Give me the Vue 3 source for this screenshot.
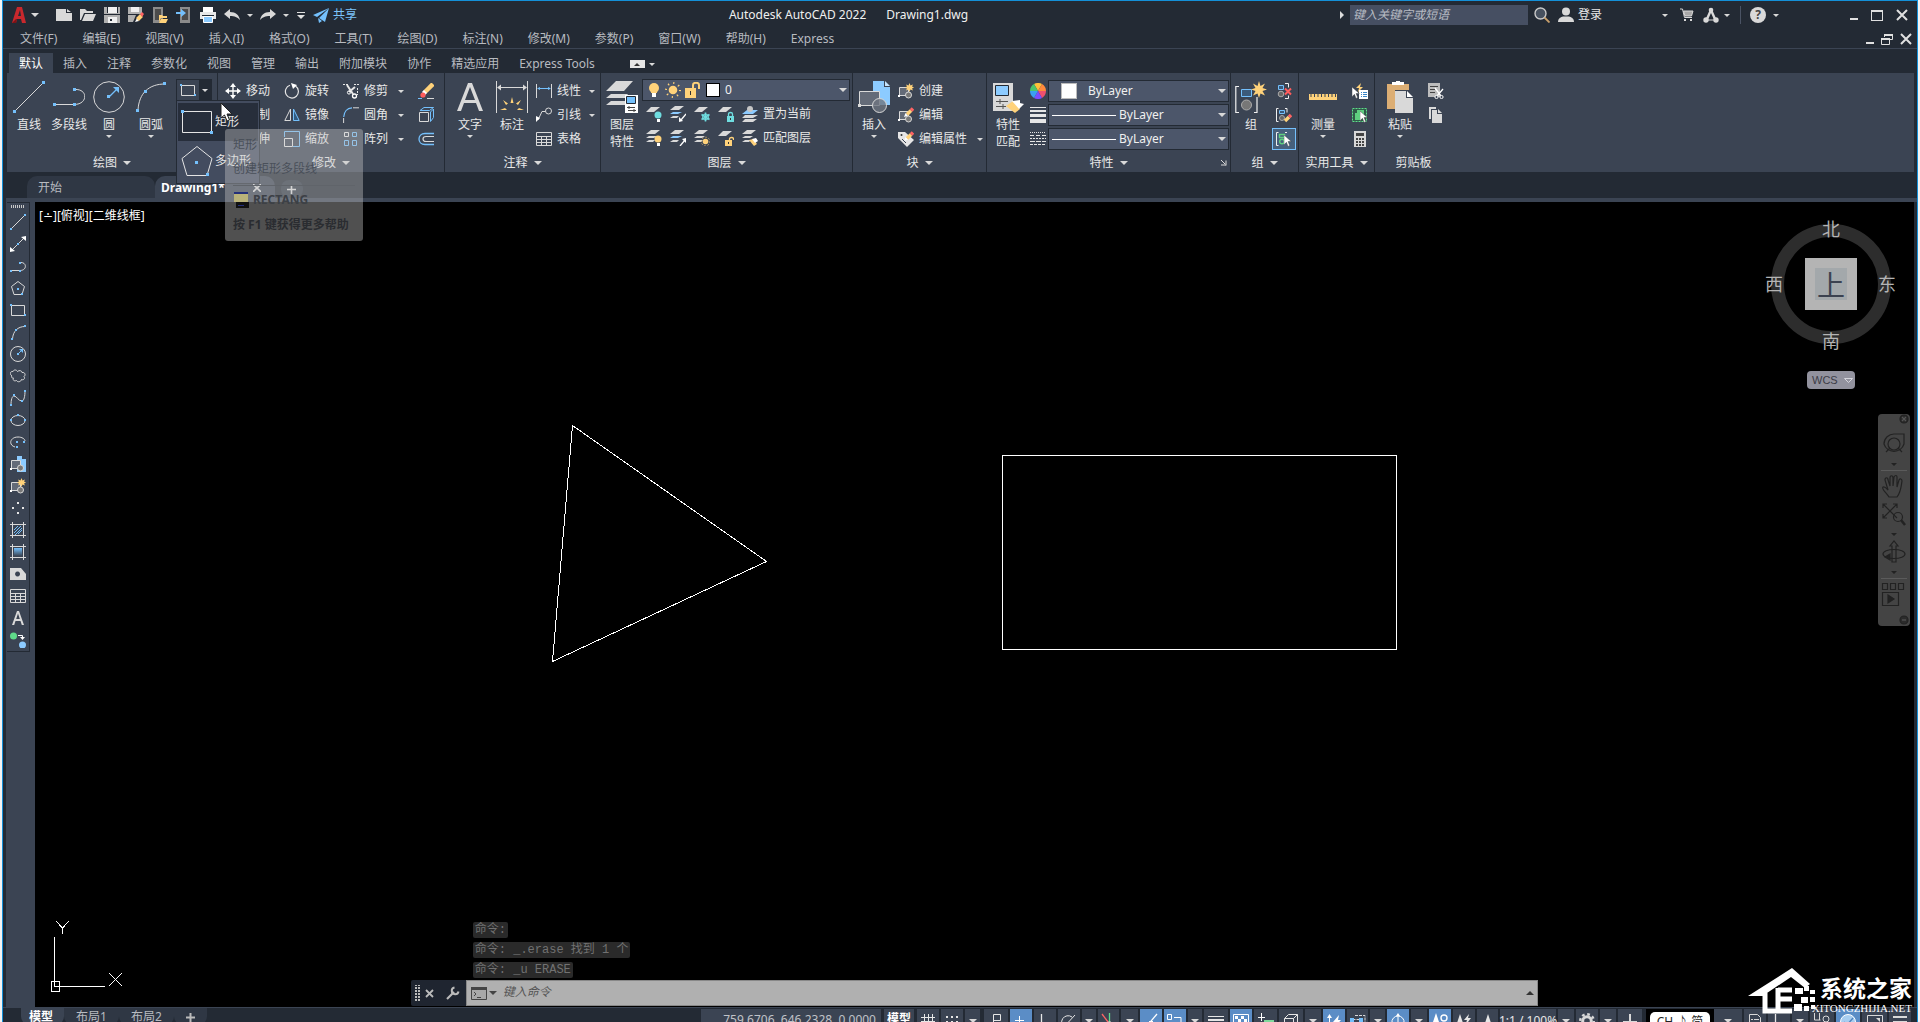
<script setup>
const quick = ['new', 'open', 'save', 'saveas', 'openmob', 'savemob', 'print']
const menus = ['文件(F)', '编辑(E)', '视图(V)', '插入(I)', '格式(O)', '工具(T)', '绘图(D)', '标注(N)', '修改(M)', '参数(P)', '窗口(W)', '帮助(H)', 'Express']
const tabs = ['默认', '插入', '注释', '参数化', '视图', '管理', '输出', '附加模块', '协作', '精选应用', 'Express Tools']
const draw = [
  { icon: 'line32', text: '直线' },
  { icon: 'pline32', text: '多段线' },
  { icon: 'circle32', text: '圆', more: true },
  { icon: 'arc32', text: '圆弧', more: true },
]
const modify = [
  [{ icon: 'move', text: '移动' }, { icon: 'copy', text: '复制' }, { icon: 'stretch', text: '拉伸' }],
  [{ icon: 'rotate', text: '旋转' }, { icon: 'mirror', text: '镜像' }, { icon: 'scale', text: '缩放' }],
  [{ icon: 'trim', text: '修剪', more: true }, { icon: 'fillet', text: '圆角', more: true }, { icon: 'array', text: '阵列', more: true }],
]
const modifyExtra = ['erase', 'explode', 'offset']
const annotate = [{ icon: 'linear', text: '线性', more: true }, { icon: 'leader', text: '引线', more: true }, { icon: 'table', text: '表格' }]
const layerRows = [
  { icons: ['lay-off', 'lay-iso', 'lay-freeze', 'lay-lock', 'lay-cur'], text: '置为当前' },
  { icons: ['lay-on', 'lay-uniso', 'lay-thaw', 'lay-unlock', 'lay-match'], text: '匹配图层' },
]
const block = [{ icon: 'bcreate', text: '创建' }, { icon: 'bedit', text: '编辑' }, { icon: 'battr', text: '编辑属性', more: true }]
const tools = ['line', 'xline', 'pline', 'polygon', 'rect', 'arc', 'circle', 'cloud', 'spline', 'ellipse', 'earc', 'insert', 'bcreate', 'points', 'hatch', 'gradient', 'region', 'table', 'text', 'addsel']
const status = [
  { icon: 'grid', w: 24 }, { icon: 'snap', w: 24 }, { more: true, w: 19, gap: true },
  { icon: 'infer', w: 26 }, { icon: 'dyn', w: 24, on: true }, { icon: 'ortho', w: 24 },
  { icon: 'polar', w: 24 }, { more: true, w: 16 }, { icon: 'iso', w: 23 }, { more: true, w: 19 },
  { icon: 'track', w: 24, on: true }, { icon: 'osnap', w: 24, on: true }, { more: true, w: 16 },
  { icon: 'lwt', w: 26 }, { icon: 'transp', w: 24, on: true }, { icon: 'cycle', w: 25 },
  { icon: 'cube', w: 26 }, { more: true, w: 18 }, { icon: 'ducs', w: 24, on: true },
  { icon: 'filter', w: 23 }, { more: true, w: 17 }, { icon: 'gizmo', w: 24, on: true }, { more: true, w: 18 },
  { icon: 'anno', w: 24, on: true }, { icon: 'annoauto', w: 24 }, { icon: 'annoscale', w: 23 },
  { text: '1:1 / 100%', w: 58 }, { more: true, w: 18 }, { icon: 'gear', w: 24 }, { more: true, w: 18 },
  { icon: 'plus', w: 28, gap: true },
]
const statusEnd = [
  { more: true, w: 30 }, { icon: 'props', w: 24 }, { icon: 'ortho', w: 24 }, { more: true, w: 18 },
  { icon: 'isolate', w: 26 }, { icon: 'hw', w: 26, on: true }, { icon: 'full', w: 27 }, { icon: 'bars', w: 24 },
]
const history = ['命令:', '命令: _.erase 找到 1 个', '命令: _u ERASE']
</script>

<template>
  <div class="desk">
    <svg class="defs" width="0" height="0" aria-hidden="true">
      <defs>
        <linearGradient id="gr" x1="0" y1="0" x2="0" y2="1"><stop offset="0" stop-color="#74c0fc" /><stop offset="1" stop-color="#3b4453" /></linearGradient>
        <!-- quick access -->
        <symbol id="i-new" viewBox="0 0 16 16"><path fill="#d9d9d9" d="M0 2h10v4h6v8H0zM11 2l4 3h-4z" /></symbol>
        <symbol id="i-open" viewBox="0 0 16 16"><path fill="#d9d9d9" d="M0 2h5l2 2h6v2H4L1 13H0zM5 7h11l-3 7H2z" /></symbol>
        <symbol id="i-save" viewBox="0 0 16 16"><path fill="#b0b0b0" d="M0 0h16v16H0z" /><path fill="#f0f0f0" d="M4 0h9v6H4zM4 10h9v6H4z" /><path fill="#232a34" d="M0 7h16v1H0zM6 12h2v2H6zM3 0h1v6H3zM13 0h1v6h-1z" /></symbol>
        <symbol id="i-saveas" viewBox="0 0 16 16"><path fill="#b0b0b0" d="M0 0h14v7H0zM0 8h8l-3 7H0z" /><path fill="#f0f0f0" d="M3 0h8v5H3z" /><path fill="#fff" d="M7 15l2-4 2 3z" /><path stroke="#ffd27a" stroke-width="4" d="M9.500 12.500l4-4" /><path fill="#ff6464" d="M12 7l2-2 2 2-2 3z" /></symbol>
        <symbol id="i-openmob" viewBox="0 0 16 16"><path fill="#8b8b8b" d="M1 0h10v16H1z" /><path fill="#4b4b4b" d="M3 2h6v11H3z" /><path fill="#ffd27a" d="M7 8h3l1 1h4v2H9l-2 4zM9 12h7l-2 4H7z" /></symbol>
        <symbol id="i-savemob" viewBox="0 0 16 16"><path fill="#8b8b8b" d="M4 0h10v16H4z" /><path fill="#4b4b4b" d="M6 2h6v11H6z" /><path fill="#74c0fc" d="M0 5h5V2l5 4-5 4V7H0z" /></symbol>
        <symbol id="i-print" viewBox="0 0 16 16"><path fill="#fff" d="M3 0h10v5H3z" /><path fill="#e8e8e8" d="M0 5h16v7H0z" /><path fill="#232a34" d="M2 8h12v1H2z" /><path fill="#8ccbff" stroke="#fff" d="M3.500 9.500h9v6h-9z" /></symbol>
        <symbol id="i-undo" viewBox="0 0 16 16"><path fill="#d9d9d9" d="M0 7l6-5v3c6 0 9 3 10 8-3-3-5-4-10-4v3z" /></symbol>
        <symbol id="i-redo" viewBox="0 0 16 16"><path fill="#d9d9d9" d="M16 7l-6-5v3C4 5 1 8 0 13c3-3 5-4 10-4v3z" /></symbol>
        <symbol id="i-plane" viewBox="0 0 16 16"><path fill="#74c0fc" d="M16 1L0 8l4 2zM16 1L6 11l6 4zM5 11l4 3-3 2z" /></symbol>
        <!-- drawing tools, large -->
        <symbol id="i-line32" viewBox="0 0 32 32"><path stroke="#d9d9d9" d="M2 30L30 2" /><path fill="#74c0fc" d="M0 29h3v3H0zM29 0h3v3h-3z" /></symbol>
        <symbol id="i-pline32" viewBox="0 0 32 32"><path fill="none" stroke="#d9d9d9" d="M2 23.500h19c14 0 14-15 2-15" /><path fill="#74c0fc" d="M0 22h3v3H0zM20 22h3v3h-3zM20 7h3v3h-3z" /></symbol>
        <symbol id="i-circle32" viewBox="0 0 32 32"><circle cx="16" cy="16" r="15.300" fill="none" stroke="#d9d9d9" /><path stroke="#74c0fc" stroke-width="1.300" d="M16 16l8-8" /><path fill="#74c0fc" d="M14 14h3v3h-3zM26 6v6l-6-6z" /></symbol>
        <symbol id="i-arc32" viewBox="0 0 32 32"><path fill="none" stroke="#d9d9d9" d="M3 29C4 12 14 3 30 3" /><path fill="#74c0fc" d="M1 28h3v3H1zM9 9h3v3H9zM28 1h3v3h-3z" /></symbol>
        <symbol id="i-rect32" viewBox="0 0 32 32"><path fill="none" stroke="#e4e4e4" d="M1.500 5.500h29v21h-29z" /><path fill="#74c0fc" d="M0 4h3v3H0zM29 25h3v3h-3z" /></symbol>
        <symbol id="i-poly32" viewBox="0 0 32 32"><path fill="none" stroke="#e4e4e4" d="M16 1.500l15 12-5 17H6l-5-17z" /><path fill="#74c0fc" d="M14 16h3v3h-3zM25 28h3v3h-3z" /></symbol>
        <symbol id="i-text32" viewBox="0 0 32 32"><path fill="#d9d9d9" fill-rule="evenodd" d="M3 30L14 2h4l11 28h-4l-3-8H10l-3 8zM11 19h10L16 6z" /></symbol>
        <symbol id="i-dim32" viewBox="0 0 32 32"><path fill="none" stroke="#d9d9d9" d="M.5 0v32M31.500 0v32M2 6.500h28" /><path fill="#d9d9d9" d="M1 6.500l4-3v6zM31 6.500l-4-3v6z" /><path fill="#ffd27a" d="M14.500 22l1.500-6 1.500 6zM10 24l-3-5 5 3.500zM22 24l3-5-5 3.500zM9 27l-5 2h7zM23 27l5 2h-7z" /></symbol>
        <symbol id="i-layers32" viewBox="0 0 32 32"><path fill="#d9d9d9" d="M10 0h17l-9 10H0zM5 13h17l-3 4H0zM5 20h14v4H0z" /><path fill="#fff" d="M19 14h13v18H19z" /><path fill="#74c0fc" stroke="#232a34" d="M20.500 15.500h9v7h-9z" /><path fill="none" stroke="#444" d="M21 26.500h8M22 29.500h8M23 25v3M28 28v3" /></symbol>
        <symbol id="i-insert32" viewBox="0 0 32 32"><path fill="#8ccbff" d="M15 0h11v6h6v18H15z" /><path fill="#c6e5ff" d="M27 0l5 5h-5z" /><path fill="#646b78" stroke="#d9d9d9" d="M1.500 10.500h20v14h-20z" /><path fill="#d9d9d9" d="M0 23h3v3H0z" /><circle cx="21.500" cy="24.500" r="7" fill="#6e7480" fill-opacity=".8" stroke="#d9d9d9" /></symbol>
        <symbol id="i-match32" viewBox="0 0 32 32"><path fill="#d9d9d9" d="M1 2h20v28H1z" /><path fill="#8ccbff" stroke="#232a34" d="M3.500 4.500h13v10h-13z" /><path stroke="#555" d="M4 20.500h12M4 25.500h10M8 18v5M11 23v5" /><path fill="#ffd27a" d="M14 25l7-5 7 8-5 4z" /><path fill="#fff" d="M20 20l8-1v3l4 1-5 5z" /></symbol>
        <symbol id="i-group32" viewBox="0 0 32 32"><path fill="none" stroke="#f0f0f0" stroke-width="1.200" d="M4 5.500H.8v26H4M19 31.500h3V16" /><path fill="#3b5a7a" stroke="#74c0fc" d="M6.500 8.500h10v7h-10z" /><circle cx="11.500" cy="24" r="5" fill="#777" stroke="#aaa" /><path fill="#ffd27a" d="M24 0l1.500 5L30 2.500 27.500 7l4.500 1.500L27.500 10l2.500 4.500-4.500-2L24 17l-1.500-4.500-4.500 2 2.500-4.500L16 8.500 20.500 7 18 2.500 22.500 5z" /></symbol>
        <symbol id="i-ruler32" viewBox="0 0 32 32"><path fill="#ffd27a" d="M2 13h1.500v3h1v-3h2.500v3h1v-3h2.500v3h1v-3h2.500v3h1v-3h2.500v3h1v-3h2.500v3h1v-3h2.500v3h1v-3h2.500v3h1v-3H30v6H2z" /></symbol>
        <symbol id="i-paste32" viewBox="0 0 32 32"><path fill="#dcae74" d="M3 3h22v6H11v19H3z" /><path fill="#fff" d="M8 4V1h4V0h4v1h4v3z" /><path fill="#d9d9d9" d="M11 10h11v7h7v15H11z" /><path fill="#fff" d="M23 10l6 6h-6z" /></symbol>
        <!-- modify -->
        <symbol id="i-move" viewBox="0 0 16 16"><path stroke="#fff" stroke-width="1.400" d="M8 2v12M2 8h12" /><path fill="#fff" d="M8 0l3 4H5zM8 16l3-4H5zM0 8l4-3v6zM16 8l-4-3v6z" /></symbol>
        <symbol id="i-copy" viewBox="0 0 16 16"><circle cx="5" cy="5" r="4" fill="none" stroke="#ddd" /><circle cx="11" cy="11" r="4" fill="none" stroke="#74c0fc" /></symbol>
        <symbol id="i-stretch" viewBox="0 0 16 16"><path fill="none" stroke="#ddd" d="M2.500 2.500h11v11h-11z" /></symbol>
        <symbol id="i-rotate" viewBox="0 0 16 16"><path fill="none" stroke="#e6e6e6" stroke-width="1.200" d="M6 2.300a6.500 6.500 0 1 0 5.500.8" /><path fill="#fff" d="M7 0l6 2-4 4z" /></symbol>
        <symbol id="i-mirror" viewBox="0 0 16 16"><path fill="none" stroke="#d9d9d9" d="M6.500 2v11.500H.8z" /><path fill="#335b80" stroke="#74c0fc" d="M9.500 2v11.500h5.700z" /></symbol>
        <symbol id="i-scale" viewBox="0 0 16 16"><path fill="none" stroke="#74c0fc" d="M.5 6V.5h15v15H9" /><path fill="none" stroke="#e6e6e6" d="M.5 7.500h8v8h-8z" /></symbol>
        <symbol id="i-trim" viewBox="0 0 16 16"><path stroke="#e6e6e6" stroke-dasharray="2 1" d="M0 1.500h6M11 1.500h5" /><path stroke="#e6e6e6" stroke-width="2" d="M4 2l6 9M12 4l-6 5" /><circle cx="11.500" cy="13" r="2" fill="none" stroke="#fff" stroke-width="1.300" /><circle cx="6" cy="9.500" r="1.600" fill="none" stroke="#fff" /><path stroke="#e6e6e6" stroke-dasharray="2 1" d="M14.500 5v7" /></symbol>
        <symbol id="i-fillet" viewBox="0 0 16 16"><path fill="none" stroke="#74c0fc" stroke-width="1.200" d="M.7 10C1 5 4 1 9 .8" /><path stroke="#d9d9d9" d="M10 .8h6M.6 11v5" /></symbol>
        <symbol id="i-array" viewBox="0 0 16 16"><g fill="none" stroke="#74c0fc"><path stroke="#e6e6e6" d="M1.500 1.500h4v4h-4z" /><path d="M9.500 1.500h4v4h-4zM1.500 9.500h4v5h-4zM9.500 9.500h4v5h-4z" /></g></symbol>
        <symbol id="i-erase" viewBox="0 0 16 16"><path stroke="#ffd27a" stroke-width="4.500" d="M7 9l8-8" /><path stroke="#fff" stroke-width="4.500" d="M5.500 10.500l2-2" /><circle cx="5" cy="12" r="2.600" fill="#ff5c5c" /><path stroke="#d9d9d9" d="M9 15.500h7" /><path stroke="#74c0fc" d="M0 15.500h4" /></symbol>
        <symbol id="i-explode" viewBox="0 0 16 16"><path fill="none" stroke="#d9d9d9" d="M1.500 5.500h9v9h-9z" /><path fill="none" stroke="#74c0fc" d="M2 3.500l4-3h9.500l-4 3zM12.500 5l3-3v8.500l-3 4z" /></symbol>
        <symbol id="i-offset" viewBox="0 0 16 16"><path fill="none" stroke="#d9d9d9" stroke-width="1.200" d="M16 5.500H8c-4 0-4 5 0 5h8" /><path fill="none" stroke="#74c0fc" stroke-width="1.300" d="M16 2.500H7c-8 0-8 11 0 11h9" /></symbol>
        <!-- annotate -->
        <symbol id="i-linear" viewBox="0 0 16 16"><path stroke="#d9d9d9" d="M.5 1v14M15.500 1v14" /><path stroke="#74c0fc" d="M2 5.500h12" /><path fill="#74c0fc" d="M1 5.500L4 4v3zM15 5.500L12 4v3z" /></symbol>
        <symbol id="i-leader" viewBox="0 0 16 16"><circle cx="12.500" cy="4" r="3" fill="none" stroke="#d9d9d9" /><path fill="none" stroke="#d9d9d9" d="M9.500 4.500H6L2 13" /><path fill="#fff" d="M0 15V9l4 2z" /></symbol>
        <symbol id="i-table" viewBox="0 0 16 16"><path fill="none" stroke="#d9d9d9" d="M.5 1.500h15v13H.5zM.5 5.500h15M.5 8.500h15M.5 11.500h15M5.500 5v10M10.500 5v10" /></symbol>
        <!-- layers -->
        <symbol id="i-one" viewBox="0 0 16 16"><path fill="#d9d9d9" d="M5 1h9L8 6H0z" /></symbol>
        <symbol id="i-stack" viewBox="0 0 16 16"><path fill="#d9d9d9" d="M5 0h9l-5 4H0zM3 6h8l-3 2H0zM3 10h6l-2 2H0z" /></symbol>
        <symbol id="i-stackb" viewBox="0 0 16 16"><path fill="#d9d9d9" d="M5 0h9l-5 4H0z" /><path fill="#8ccbff" d="M3 6h9l-4 2H0z" /><path fill="#d9d9d9" d="M3 10h6l-2 2H0z" /></symbol>
        <symbol id="i-lay-off" viewBox="0 0 16 16"><use href="#i-one" /><circle cx="12" cy="9" r="3.500" fill="#6fdde0" /><path fill="#fff" d="M11 13h3v3h-3z" /></symbol>
        <symbol id="i-lay-iso" viewBox="0 0 16 16"><use href="#i-stackb" /><path stroke="#fff" stroke-width="1.300" d="M16 8l-5 6" /><path fill="#fff" d="M9 16v-5l4 4z" /></symbol>
        <symbol id="i-lay-freeze" viewBox="0 0 16 16"><use href="#i-one" /><path stroke="#6fdde0" stroke-width="1.600" d="M11.500 6.500v9M7.500 8.500l8 5M15.500 8.500l-8 5" /><circle cx="11.500" cy="11" r="3" fill="none" stroke="#6fdde0" /></symbol>
        <symbol id="i-lay-lock" viewBox="0 0 16 16"><use href="#i-one" /><path fill="none" stroke="#6fdde0" stroke-width="1.300" d="M10.500 10V8c0-2 4-2 4 0v2" /><path fill="#6fdde0" d="M9 10h7v6H9z" /><path fill="#333" d="M12 12h1v2h-1z" /></symbol>
        <symbol id="i-lay-cur" viewBox="0 0 16 16"><path fill="#8ccbff" d="M5 4h11l-5 4H0z" /><path fill="#d9d9d9" d="M3 9h13l-5 3H0zM3 13h12l-4 3H0z" /><circle cx="8" cy="3" r="3" fill="#c6c6c6" /></symbol>
        <symbol id="i-lay-on" viewBox="0 0 16 16"><use href="#i-stack" /><circle cx="12" cy="9" r="3.500" fill="#ffd27a" /><path fill="#fff" d="M11 13h3v3h-3z" /></symbol>
        <symbol id="i-lay-uniso" viewBox="0 0 16 16"><use href="#i-stackb" /><path stroke="#fff" stroke-width="1.300" d="M10 16l5-6" /><path fill="#fff" d="M16 8v5l-4-4z" /></symbol>
        <symbol id="i-lay-thaw" viewBox="0 0 16 16"><use href="#i-stack" /><circle cx="11.500" cy="11.500" r="2.800" fill="#ffd27a" /><circle cx="11.500" cy="11.500" r="4.300" fill="none" stroke="#ffd27a" stroke-dasharray="1 2.300" /></symbol>
        <symbol id="i-lay-unlock" viewBox="0 0 16 16"><use href="#i-one" /><path fill="none" stroke="#ffd27a" stroke-width="1.300" d="M11.500 11V9c0-2 4-2 4 0v1" /><path fill="#ffd27a" d="M7 10h7v6H7z" /><path fill="#333" d="M10 12h1v2h-1z" /></symbol>
        <symbol id="i-lay-match" viewBox="0 0 16 16"><use href="#i-stack" /><path fill="#ffd27a" d="M7 10l4-1 4 5-3 2z" /><path fill="#fff" d="M10 9l4-1 2 3-3 2z" /></symbol>
        <symbol id="i-bulb" viewBox="0 0 16 16"><circle cx="8" cy="6" r="5" fill="#ffd27a" /><path fill="#ffd27a" d="M5 9h6v2H5z" /><path fill="#fff" d="M6 11h4v4H6z" /></symbol>
        <symbol id="i-sun" viewBox="0 0 16 16"><circle cx="8" cy="8" r="4.300" fill="#ffd27a" /><circle cx="8" cy="8" r="7" fill="none" stroke="#ffd27a" stroke-width="2" stroke-dasharray="1.200 4.300" /></symbol>
        <symbol id="i-unlock" viewBox="0 0 16 16"><path fill="#ffd27a" d="M1 6h11v10H1z" /><path fill="none" stroke="#ffd27a" stroke-width="2" d="M9 7V3c0-3 6-3 6 0v4" /><path fill="#333" d="M6 9h1v4H6z" /></symbol>
        <!-- blocks -->
        <symbol id="i-blk" viewBox="0 0 16 16"><path fill="#646b78" stroke="#d9d9d9" d="M1.500 4.500h9v8h-9z" /><path fill="#fff" d="M0 12h2v2H0z" /><circle cx="10.500" cy="12" r="3" fill="#777" stroke="#d9d9d9" /></symbol>
        <symbol id="i-pen" viewBox="0 0 16 16"><path stroke="#ffd27a" stroke-width="3.600" d="M9 7.500l4-4" /><path stroke="#ff6464" stroke-width="3.600" d="M13 3.500l2-2" /><path fill="#fff" d="M6 10l1.500-4L10 8.700z" /></symbol>
        <symbol id="i-bcreate" viewBox="0 0 16 16"><use href="#i-blk" /><path fill="#ffd27a" d="M11.500 0l1 2.500L15 1.500l-1 2 2 1-2 1 1 2-2.500-1-1 2.500-1-2.500-2.500 1 1-2-2-1 2-1-1-2 2.500 1z" /></symbol>
        <symbol id="i-bedit" viewBox="0 0 16 16"><use href="#i-blk" /><use href="#i-pen" /></symbol>
        <symbol id="i-battr" viewBox="0 0 16 16"><path fill="#e6e6e6" d="M0 1h7l9 8-7 7-9-9z" /><circle cx="3.500" cy="4" r="1" fill="#333" /><path stroke="#3b4453" d="M4 8l4 4" /><use href="#i-pen" /></symbol>
        <symbol id="i-insert" viewBox="0 0 16 16"><path fill="#8ccbff" d="M7 0h5v3h4v13H7z" /><use href="#i-blk" /></symbol>
        <!-- properties -->
        <symbol id="i-wheel" viewBox="0 0 16 16"><path fill="#ffc03a" d="M8 8L4 1.100A8 8 0 0 1 12 1.100z" /><path fill="#ff8a3c" d="M8 8l4-6.900A8 8 0 0 1 16 8z" /><path fill="#f0506e" d="M8 8h8a8 8 0 0 1-4 6.900z" /><path fill="#7c4dff" d="M8 8l4 6.900a8 8 0 0 1-8 0z" /><path fill="#3aa0f0" d="M8 8l-4 6.900A8 8 0 0 1 0 8z" /><path fill="#4cc56c" d="M8 8H0a8 8 0 0 1 4-6.900z" /></symbol>
        <symbol id="i-weights" viewBox="0 0 16 16"><path fill="#e6e6e6" d="M0 0h16v1H0zM0 3h16v2H0zM0 7h16v3H0zM0 12h16v4H0z" /></symbol>
        <symbol id="i-ltypes" viewBox="0 0 16 16"><g stroke="#e6e6e6"><path stroke-dasharray="1 1" d="M0 1.500h16" /><path stroke-dasharray="4 2" d="M0 4.500h16" /><path stroke-dasharray="2 1" d="M0 7.500h16" /><path stroke-dasharray="5 1" d="M0 10.500h16" /><path stroke-dasharray="3 1" d="M0 13.500h16" /></g></symbol>
        <!-- group, utilities, clipboard -->
        <symbol id="i-grp" viewBox="0 0 16 16"><path fill="none" stroke="#f0f0f0" d="M2.500 1.500h-2v13h2M9 1.500h2v4" /><path fill="#3b5a7a" stroke="#74c0fc" d="M3.500 3.500h5v3h-5z" /><circle cx="6" cy="11" r="2.500" fill="#666" stroke="#aaa" /></symbol>
        <symbol id="i-arrow" viewBox="0 0 16 16"><path fill="#fff" stroke="#333" stroke-width=".5" d="M0 0v12l3-3 2 5 2-1-2-5h4z" /></symbol>
        <symbol id="i-ungroup" viewBox="0 0 16 16"><path fill="#3b5a7a" stroke="#74c0fc" d="M2.500 2.500h5v4h-5z" /><circle cx="5" cy="11" r="2.800" fill="#666" stroke="#aaa" /><path fill="none" stroke="#f0f0f0" d="M9 .5h3.500v4M9 15.500h3.500v-3" /><path stroke="#ff5c5c" stroke-width="2" d="M9 5.500l6 6M15 5.500l-6 6" /></symbol>
        <symbol id="i-grpedit" viewBox="0 0 16 16"><use href="#i-grp" /><path stroke="#ffd27a" stroke-width="3.400" d="M9 14l4-4" /><path stroke="#ff6464" stroke-width="3.400" d="M13 10l2-2" /></symbol>
        <symbol id="i-grpsel" viewBox="0 0 16 16"><path fill="none" stroke="#f0f0f0" d="M2.500 1.500h-2v13h2M9 1.500h2" /><path fill="none" stroke="#5fcf80" stroke-width="1.400" d="M3.500 3.500h5v3h-5z" /><circle cx="6" cy="10.500" r="2.300" fill="none" stroke="#5fcf80" stroke-width="1.400" /><use href="#i-arrow" x="8" y="4" width="13" height="13" /></symbol>
        <symbol id="i-quick" viewBox="0 0 16 16"><path fill="#ffd27a" d="M9 0L4 5h3L6 9l5-5H8z" /><path fill="#fff" d="M7 7h9v9H7z" /><path stroke="#3a86c8" d="M9 9.500h1M11 9.500h4M9 11.500h1M11 11.500h4M9 13.500h1M11 13.500h4" /><use href="#i-arrow" x="0" y="4" width="13" height="13" /></symbol>
        <symbol id="i-selall" viewBox="0 0 16 16"><path fill="#2f5c48" stroke="#5fe08a" stroke-dasharray="2 1" d="M.5 1.500h14v13H.5z" /><path fill="#5fcf80" d="M5 3h7v6H9v4H3V6h2z" /><use href="#i-arrow" x="8" y="4" width="13" height="13" /></symbol>
        <symbol id="i-calc" viewBox="0 0 16 16"><path fill="#d9d9d9" d="M2 0h12v16H2z" /><path fill="#444" d="M4 2h8v3H4zM4 7h2v2H4zM7 7h2v2H7zM10 7h2v2h-2zM4 10h2v2H4zM7 10h2v2H7zM10 10h2v2h-2zM4 13h2v2H4zM7 13h2v2H7zM10 13h2v2h-2z" /></symbol>
        <symbol id="i-cut" viewBox="0 0 16 16"><path fill="#bdbdbd" d="M0 0h12v14H0z" /><path stroke="#444" d="M2 3.500h8M2 6.500h5M2 9.500h5" /><path stroke="#fff" stroke-width="1.300" d="M7 5l6 8M15 6l-6 7" /><circle cx="8.500" cy="14" r="1.600" fill="#3b4453" stroke="#fff" /><circle cx="13.500" cy="14" r="1.600" fill="#3b4453" stroke="#fff" /></symbol>
        <symbol id="i-copyclip" viewBox="0 0 16 16"><path fill="#d9d9d9" d="M1 0h7v2H3v10H1z" /><path fill="#d9d9d9" d="M4 3h5v4h5v9H4zM10 2l4 4h-4z" /></symbol>
        <!-- side toolbar -->
        <symbol id="i-line" viewBox="0 0 16 16"><path stroke="#d9d9d9" d="M1 15L15 1" /><path fill="#74c0fc" d="M0 14h2v2H0zM14 0h2v2h-2z" /></symbol>
        <symbol id="i-xline" viewBox="0 0 16 16"><path stroke="#d9d9d9" d="M2 14L14 2" /><path fill="#fff" d="M0 16v-5l5 4zM16 0v5l-5-4z" /><path fill="#74c0fc" d="M7 7h2v2H7z" /></symbol>
        <symbol id="i-pline" viewBox="0 0 16 16"><path fill="none" stroke="#d9d9d9" d="M1 12.500h9c7 0 7-8 1-8" /><path fill="#74c0fc" d="M0 12h2v2H0zM9 12h2v2H9zM9 4h2v2H9z" /></symbol>
        <symbol id="i-polygon" viewBox="0 0 16 16"><path fill="none" stroke="#d9d9d9" d="M8 1.500l6.500 5-2.500 8H4l-2.500-8z" /><path fill="#74c0fc" d="M7 8h2v2H7zM11 13h2v2h-2z" /></symbol>
        <symbol id="i-rect" viewBox="0 0 16 16"><path fill="none" stroke="#d9d9d9" d="M1.500 3.500h13v10h-13z" /><path fill="#74c0fc" d="M0 2h2v2H0zM14 12h2v2h-2z" /></symbol>
        <symbol id="i-arc" viewBox="0 0 16 16"><path fill="none" stroke="#d9d9d9" d="M2.500 15C3 7 8 2.500 15 2.500" /><path fill="#74c0fc" d="M1 14h2v2H1zM5 5h2v2H5zM14 1h2v2h-2z" /></symbol>
        <symbol id="i-circle" viewBox="0 0 16 16"><circle cx="8" cy="8" r="7.500" fill="none" stroke="#d9d9d9" /><path stroke="#74c0fc" d="M8 8l4-4" /><path fill="#74c0fc" d="M7 7h2v2H7zM13 3v4L9 3z" /></symbol>
        <symbol id="i-cloud" viewBox="0 0 16 16"><path fill="none" stroke="#d9d9d9" d="M2 8C-1 6 .5 3 3 3.500 4 1 7 2 7.500 3.500 9 2 12 2.500 12 4.500c3-.5 4 2.500 2 4 1.500 2-.5 4-2.500 3-.5 2.500-4 3-5 1C4 13.500 2.500 12 3.500 10 1.500 10 1 9 2 8z" /></symbol>
        <symbol id="i-spline" viewBox="0 0 16 16"><path fill="none" stroke="#d9d9d9" d="M1 15c0-5 1-9 3-9 3 0 4 5 8 5 2 0 3-5 3-10" /><path fill="#74c0fc" d="M0 14h2v2H0zM3 4h2v2H3zM11 10h2v2h-2zM14 0h2v2h-2z" /></symbol>
        <symbol id="i-ellipse" viewBox="0 0 16 16"><ellipse cx="8" cy="8.500" rx="7" ry="5" fill="none" stroke="#d9d9d9" /><path fill="#74c0fc" d="M0 7h2v2H0zM14 7h2v2h-2zM7 2h2v2H7z" /></symbol>
        <symbol id="i-earc" viewBox="0 0 16 16"><path fill="none" stroke="#d9d9d9" d="M5 13C-2 11 0 3 8 3c4 0 7 2 7 4" /><path fill="#74c0fc" d="M6 12h2v2H6zM6 7h2v2H6zM13 7h2v2h-2z" /></symbol>
        <symbol id="i-points" viewBox="0 0 16 16"><path fill="#e6e6e6" d="M7 2h2v2H7zM2 7h2v2H2zM12 7h2v2h-2zM7 12h2v2H7z" /></symbol>
        <symbol id="i-hatch" viewBox="0 0 16 16"><path stroke="#d9d9d9" d="M0 2.500h16M0 13.500h16M2.500 0v16M13.500 0v16" /><path stroke="#74c0fc" d="M4 8l4-4M4 11l7-7M5 13l7-7M8 12l4-4" /></symbol>
        <symbol id="i-gradient" viewBox="0 0 16 16"><path fill="url(#gr)" d="M4 4h8v8H4z" /><path stroke="#d9d9d9" d="M0 2.500h16M0 13.500h16M2.500 0v16M13.500 0v16" /></symbol>
        <symbol id="i-region" viewBox="0 0 16 16"><path fill="#d9d9d9" fill-rule="evenodd" d="M0 2h11l5 6v6H0zM7.500 5.500a2.500 2.500 0 1 0 .1 0z" /></symbol>
        <symbol id="i-text" viewBox="0 0 16 16"><path fill="#d9d9d9" fill-rule="evenodd" d="M2 15L7 1h2l5 14h-2.200l-1.300-4h-5l-1.300 4zM6.200 9h3.600L8 3.500z" /></symbol>
        <symbol id="i-addsel" viewBox="0 0 16 16"><circle cx="3.500" cy="4" r="3.500" fill="#5fdb8a" /><circle cx="12.500" cy="13" r="3.500" fill="#8ccbff" /><path fill="none" stroke="#fff" d="M8 3.500h4.500V7" /><path fill="#fff" d="M10 5h5l-2.500 3z" /></symbol>
        <!-- status bar -->
        <symbol id="i-grid" viewBox="0 0 16 16"><path stroke="#e6e6e6" d="M4.500 1v14M8.500 1v14M12.500 1v14M1 4.500h14M1 8.500h14M1 12.500h14" /></symbol>
        <symbol id="i-snap" viewBox="0 0 16 16"><path fill="#e6e6e6" d="M2 3h2v2H2zM7 3h2v2H7zM12 3h2v2h-2zM2 8h2v2H2zM7 8h2v2H7zM12 8h2v2h-2zM2 13h2v2H2z" /></symbol>
        <symbol id="i-infer" viewBox="0 0 16 16"><path fill="none" stroke="#e6e6e6" d="M5.500 16V1.500h7v6h-7" /></symbol>
        <symbol id="i-dyn" viewBox="0 0 16 16"><path stroke="#fff" d="M6.500 3v9M2 7.500h9" /></symbol>
        <symbol id="i-ortho" viewBox="0 0 16 16"><path fill="none" stroke="#e6e6e6" stroke-width="1.300" d="M4.500 1v13H15" /></symbol>
        <symbol id="i-polar" viewBox="0 0 16 16"><path fill="none" stroke="#e6e6e6" d="M2 15L14 2M13 12A6.500 6.500 0 1 1 11 4" /></symbol>
        <symbol id="i-iso" viewBox="0 0 16 16"><path stroke="#ff6464" stroke-width="1.300" d="M1 1l6 8" /><path stroke="#5fdb8a" stroke-width="1.300" d="M8.500 0v9" /><path fill="none" stroke="#d9d9d9" d="M7 9h3v4H7z" /></symbol>
        <symbol id="i-track" viewBox="0 0 16 16"><path stroke="#fff" stroke-width="1.300" d="M14 1L3 14" /><path fill="#fff" d="M6 8h4v5H6z" /></symbol>
        <symbol id="i-osnap" viewBox="0 0 16 16"><path fill="none" stroke="#fff" d="M.5 1.500h4v5h-4zM7 4.500h7V15M2.500 9v7" /></symbol>
        <symbol id="i-lwt" viewBox="0 0 16 16"><path fill="#e6e6e6" d="M0 3h16v1H0zM0 6h16v2H0zM0 10h16v3H0z" /></symbol>
        <symbol id="i-transp" viewBox="0 0 16 16"><path fill="none" stroke="#fff" d="M.5 1.500h15V16H.5z" /><path fill="#fff" d="M2 3h3v3H2zM8 3h3v3H8zM5 6h3v3H5zM11 6h3v3h-3zM2 9h3v3H2zM8 9h3v3H8z" /></symbol>
        <symbol id="i-cycle" viewBox="0 0 16 16"><path stroke="#fff" d="M3.500 0v8M0 4.500h7" /><path fill="#7fd89c" d="M6 7h10v8H6z" /></symbol>
        <symbol id="i-cube" viewBox="0 0 16 16"><path fill="none" stroke="#e6e6e6" d="M1.500 5.500h9V16h-9zM1.500 5.500l4-4h9v10l-4 4M10.500 5.500l4-4" /></symbol>
        <symbol id="i-ducs" viewBox="0 0 16 16"><path stroke="#fff" d="M3.500 2v14" /><path fill="#fff" d="M1 5l2.500-4L6 5zM13 2L7 9h3l-2 6 7-8h-3z" /></symbol>
        <symbol id="i-filter" viewBox="0 0 16 16"><path fill="none" stroke="#d9d9d9" stroke-dasharray="3 1" d="M2.500 6.500h8V16M2.500 6v9M5 2.500h10V12" /><path fill="#74c0fc" d="M0 5h4v4H0zM9 5h4v4H9z" /></symbol>
        <symbol id="i-gizmo" viewBox="0 0 16 16"><path fill="none" stroke="#fff" d="M8 1v9L3 15M8 10l5 5M8 3a6 6 0 0 0-6 7l1 3M8 3a6 6 0 0 1 6 7l-1 3" /><path fill="#fff" d="M6 3l2-3 2 3z" /></symbol>
        <symbol id="i-anno" viewBox="0 0 16 16"><path fill="#fff" d="M4 0l3 9-1 6H2L1 9z" /><circle cx="12" cy="5" r="3" fill="none" stroke="#fff" stroke-width="1.400" /></symbol>
        <symbol id="i-annoauto" viewBox="0 0 16 16"><path fill="#e6e6e6" d="M4 1l3 9-1 6H2l-1-6zM13 1L8 7h3l-2 6 6-8h-3z" /></symbol>
        <symbol id="i-annoscale" viewBox="0 0 16 16"><path fill="#e6e6e6" d="M8 1l3 9-1 6H6l-1-6z" /></symbol>
        <symbol id="i-gear" viewBox="0 0 16 16"><circle cx="8" cy="8" r="4.300" fill="none" stroke="#d9d9d9" stroke-width="3" /><circle cx="8" cy="8" r="6.800" fill="none" stroke="#d9d9d9" stroke-width="2.400" stroke-dasharray="2.700 2.640" /></symbol>
        <symbol id="i-plus" viewBox="0 0 16 16"><path stroke="#d9d9d9" stroke-width="2" d="M8 1v14M1 9h14" /></symbol>
        <symbol id="i-props" viewBox="0 0 16 16"><path fill="none" stroke="#d9d9d9" d="M2.500 1.500h8l3 3V16h-11z" /><path stroke="#d9d9d9" d="M4 6.500h2M7 6.500h5M4 10.500h2M7 10.500h5" /></symbol>
        <symbol id="i-isolate" viewBox="0 0 16 16"><path fill="none" stroke="#d9d9d9" d="M.5 0v7h6M5.500 0v7" /><circle cx="12" cy="6" r="3" fill="none" stroke="#d9d9d9" /></symbol>
        <symbol id="i-hw" viewBox="0 0 16 16"><circle cx="8" cy="9" r="7.500" fill="#a8cdf0" stroke="#fff" /><path fill="none" stroke="#4f83bd" stroke-width="1.400" d="M4 9l3 3 6-7" /></symbol>
        <symbol id="i-full" viewBox="0 0 16 16"><path fill="none" stroke="#d9d9d9" d="M.5 2.500h15V16H.5z" /><path fill="#d9d9d9" d="M9 5h4v4zM3 12v3h3z" /></symbol>
        <symbol id="i-bars" viewBox="0 0 16 16"><path fill="#d9d9d9" d="M1 3h14v2H1zM1 8h14v2H1z" /></symbol>
        <symbol id="i-x" viewBox="0 0 12 12"><path stroke="#e0e0e0" stroke-width="2" d="M1 1l10 10M11 1L1 11" /></symbol>
      </defs>
    </svg>

    <div class="window">
      <header class="title">
        <button class="ib logo" aria-label="应用程序菜单">
          <svg width="14" height="16" viewBox="0 0 14 16"><path fill="#c8282d" fill-rule="evenodd" d="M0 16L5 0h5l4 16h-4l-1-4H5l-1 4zM6 9h3L8 3z" /><path fill="#7d1216" d="M0 16l4-4 1 0-1 4z" /></svg>
        </button>
        <i class="caret lg"></i>
        <div class="quick">
          <button v-for="q in quick" :key="q" class="ib" :aria-label="q"><svg width="16" height="16"><use :href="'#i-' + q" /></svg></button>
          <button class="ib" aria-label="undo"><svg width="16" height="16"><use href="#i-undo" /></svg></button>
        </div>
        <i class="caret"></i>
        <button class="ib redo" aria-label="redo"><svg width="16" height="16"><use href="#i-redo" /></svg></button>
        <i class="caret"></i>
        <i class="custom"></i>
        <a class="share" href="#"><svg width="16" height="16"><use href="#i-plane" /></svg>共享</a>
        <h1>Autodesk AutoCAD 2022<span>Drawing1.dwg</span></h1>
        <i class="tri"></i>
        <input class="find" type="text" placeholder="键入关键字或短语" aria-label="搜索" />
        <button class="ib find-btn" aria-label="搜索"><svg width="16" height="16" viewBox="0 0 16 16"><circle cx="6.500" cy="6.500" r="5.500" fill="#47515f" stroke="#c9c9c9" stroke-width="1.400" /><path stroke="#c9a06c" stroke-width="1.800" d="M10.500 10.500l5 5" /></svg></button>
        <button class="login"><svg width="16" height="16" viewBox="0 0 16 16"><circle cx="8" cy="4.500" r="4" fill="#d9d9d9" /><path fill="#d9d9d9" d="M0 15c0-4 3-5 5-5.500h6c2 .5 5 1.500 5 5.500z" /></svg>登录</button>
        <i class="caret"></i>
        <button class="ib cart" aria-label="购物车"><svg width="14" height="16" viewBox="0 0 14 16"><path fill="none" stroke="#d9d9d9" d="M0 2h2.500l2 8.500H12" /><path fill="#a8a8a8" stroke="#d9d9d9" d="M3.500 4h9.500l-1.500 5H5z" /><path fill="#d9d9d9" d="M4 12h2v2H4zM10 12h2v2h-2z" /></svg></button>
        <button class="ib apps" aria-label="应用"><svg width="16" height="16" viewBox="0 0 16 16"><path fill="none" stroke="#d9d9d9" stroke-width="2.400" d="M8 3L4 12M8 3l4 9" /><path stroke="#d9d9d9" d="M3 13h10" /><g fill="#d9d9d9"><circle cx="8" cy="3" r="2.300" /><circle cx="3" cy="13" r="2.700" /><circle cx="13" cy="13" r="2.700" /></g></svg></button>
        <i class="caret"></i>
        <i class="sep"></i>
        <button class="help" aria-label="帮助">?</button>
        <i class="caret"></i>
        <div class="win-btns">
          <button class="ib" aria-label="最小化"><i class="min"></i></button>
          <button class="ib" aria-label="最大化"><i class="max"></i></button>
          <button class="ib" aria-label="关闭"><svg width="12" height="12"><use href="#i-x" /></svg></button>
        </div>
      </header>

      <nav class="menus">
        <a v-for="m in menus" :key="m" href="#">{{ m }}</a>
        <div class="mdi">
          <button class="ib" aria-label="最小化文档"><i class="min"></i></button>
          <button class="ib" aria-label="还原文档"><svg width="12" height="12" viewBox="0 0 12 12"><path fill="none" stroke="#e0e0e0" d="M3.500 4V1.500h8v5H9" /><path fill="#e0e0e0" d="M3 1h9v2H3zM0 5h9v2H0z" /><path fill="none" stroke="#e0e0e0" d="M.5 5.500h8v6h-8z" /></svg></button>
          <button class="ib" aria-label="关闭文档"><svg width="12" height="12"><use href="#i-x" /></svg></button>
        </div>
      </nav>

      <nav class="tabs">
        <button v-for="(t, i) in tabs" :key="t" :class="{ on: i === 0 }">{{ t }}</button>
        <button class="fold" aria-label="最小化功能区"><i></i></button>
        <i class="caret"></i>
      </nav>

      <section class="ribbon">
        <div class="panel p-draw">
          <div class="body">
            <button v-for="d in draw" :key="d.text" class="big"><svg width="32" height="32"><use :href="'#i-' + d.icon" /></svg>{{ d.text }}<i v-if="d.more" class="caret"></i></button>
            <div class="split">
              <button class="cur" aria-label="矩形"><svg width="16" height="16"><use href="#i-rect" /></svg></button>
              <button class="arrow" aria-label="更多形状"><i class="caret"></i></button>
              <div class="flyout">
                <button class="on"><svg width="32" height="32"><use href="#i-rect32" /></svg>矩形</button>
                <button><svg width="32" height="32"><use href="#i-poly32" /></svg>多边形</button>
              </div>
              <div class="tip" role="tooltip">
                <p class="dim">矩形</p>
                <p class="dim">创建矩形多段线</p>
                <hr />
                <p class="cmd"><svg width="16" height="16" viewBox="0 0 16 16"><path fill="#b9b27a" d="M1 1h14v9H1z" /><path fill="#25307a" d="M1 0h14v2H1z" /><path fill="#111" d="M3 10h13v6H3z" /><path stroke="#25307a" d="M5 13.500h6" /></svg>RECTANG</p>
                <p class="f1">按 F1 键获得更多帮助</p>
              </div>
              <svg class="pointer" width="14" height="20" viewBox="0 0 14 20"><path fill="#fff" stroke="#222" d="M1 1v15l3.500-3 2.500 6 2.500-1L7 12h5z" /></svg>
            </div>
          </div>
          <footer>绘图<i class="caret lg"></i></footer>
        </div>

        <div class="panel p-modify">
          <div class="body">
            <div v-for="(col, i) in modify" :key="i" class="col">
              <button v-for="b in col" :key="b.text" class="small"><svg width="16" height="16"><use :href="'#i-' + b.icon" /></svg>{{ b.text }}<i v-if="b.more" class="caret"></i></button>
            </div>
            <div class="col"><button v-for="b in modifyExtra" :key="b" class="small" :aria-label="b"><svg width="16" height="16"><use :href="'#i-' + b" /></svg></button></div>
          </div>
          <footer>修改<i class="caret lg"></i></footer>
        </div>

        <div class="panel p-anno">
          <div class="body">
            <button class="big"><svg width="32" height="32"><use href="#i-text32" /></svg>文字<i class="caret"></i></button>
            <button class="big"><svg width="32" height="32"><use href="#i-dim32" /></svg>标注</button>
            <div class="col"><button v-for="b in annotate" :key="b.text" class="small"><svg width="16" height="16"><use :href="'#i-' + b.icon" /></svg>{{ b.text }}<i v-if="b.more" class="caret"></i></button></div>
          </div>
          <footer>注释<i class="caret lg"></i></footer>
        </div>

        <div class="panel p-layer">
          <div class="body">
            <button class="big"><svg width="32" height="32"><use href="#i-layers32" /></svg>图层<br />特性</button>
            <div class="col">
              <label class="combo">
                <svg width="16" height="16"><use href="#i-bulb" /></svg>
                <svg width="16" height="16"><use href="#i-sun" /></svg>
                <svg width="16" height="16"><use href="#i-unlock" /></svg>
                <i class="swatch dark"></i>
                <select aria-label="图层"><option>0</option></select>
                <i class="caret lg"></i>
              </label>
              <div v-for="r in layerRows" :key="r.text" class="lrow">
                <button v-for="k in r.icons.slice(0, 4)" :key="k" class="ib" :aria-label="k"><svg width="16" height="16"><use :href="'#i-' + k" /></svg></button>
                <button class="small"><svg width="16" height="16"><use :href="'#i-' + r.icons[4]" /></svg>{{ r.text }}</button>
              </div>
            </div>
          </div>
          <footer>图层<i class="caret lg"></i></footer>
        </div>

        <div class="panel p-block">
          <div class="body">
            <button class="big"><svg width="32" height="32"><use href="#i-insert32" /></svg>插入<i class="caret"></i></button>
            <div class="col"><button v-for="b in block" :key="b.text" class="small"><svg width="16" height="16"><use :href="'#i-' + b.icon" /></svg>{{ b.text }}<i v-if="b.more" class="caret"></i></button></div>
          </div>
          <footer>块<i class="caret lg"></i></footer>
        </div>

        <div class="panel p-props">
          <div class="body">
            <button class="big"><svg width="32" height="32"><use href="#i-match32" /></svg>特性<br />匹配</button>
            <div class="col">
              <div class="prow"><svg width="16" height="16"><use href="#i-wheel" /></svg><label class="combo color"><i class="swatch"></i><select aria-label="颜色"><option>ByLayer</option></select><i class="caret lg"></i></label></div>
              <div class="prow"><svg width="16" height="16"><use href="#i-weights" /></svg><label class="combo"><i class="rule"></i><select aria-label="线宽"><option>ByLayer</option></select><i class="caret lg"></i></label></div>
              <div class="prow"><svg width="16" height="16"><use href="#i-ltypes" /></svg><label class="combo"><i class="rule"></i><select aria-label="线型"><option>ByLayer</option></select><i class="caret lg"></i></label></div>
            </div>
          </div>
          <footer>特性<i class="caret lg"></i><svg class="launch" width="7" height="7" viewBox="0 0 7 7"><path fill="none" stroke="#d9d9d9" d="M1 1l4 4M6 1.500v5M1 6h5" /></svg></footer>
        </div>

        <div class="panel p-group">
          <div class="body">
            <button class="big"><svg width="32" height="32"><use href="#i-group32" /></svg>组</button>
            <div class="col icons">
              <button class="ib" aria-label="解除编组"><svg width="16" height="16"><use href="#i-ungroup" /></svg></button>
              <button class="ib" aria-label="组编辑"><svg width="16" height="16"><use href="#i-grpedit" /></svg></button>
              <button class="ib sel" aria-label="组选择"><svg width="16" height="16"><use href="#i-grpsel" /></svg></button>
            </div>
          </div>
          <footer>组<i class="caret lg"></i></footer>
        </div>

        <div class="panel p-util">
          <div class="body">
            <button class="big"><svg width="32" height="32"><use href="#i-ruler32" /></svg>测量<i class="caret"></i></button>
            <div class="col icons">
              <button class="ib" aria-label="快速选择"><svg width="16" height="16"><use href="#i-quick" /></svg></button>
              <button class="ib" aria-label="全部选择"><svg width="16" height="16"><use href="#i-selall" /></svg></button>
              <button class="ib" aria-label="快速计算器"><svg width="16" height="16"><use href="#i-calc" /></svg></button>
            </div>
          </div>
          <footer>实用工具<i class="caret lg"></i></footer>
        </div>

        <div class="panel p-clip">
          <div class="body">
            <button class="big"><svg width="32" height="32"><use href="#i-paste32" /></svg>粘贴<i class="caret"></i></button>
            <div class="col icons">
              <button class="ib" aria-label="剪切"><svg width="16" height="16"><use href="#i-cut" /></svg></button>
              <button class="ib" aria-label="复制"><svg width="16" height="16"><use href="#i-copyclip" /></svg></button>
            </div>
          </div>
          <footer>剪贴板</footer>
        </div>
      </section>

      <nav class="files">
        <button class="file start">开始</button>
        <button class="file on">Drawing1*<svg width="8" height="8" viewBox="0 0 8 8"><path stroke="#ddd" stroke-width="1.600" d="M0 0l8 8M8 0L0 8" /></svg></button>
        <button class="add" aria-label="新图形"><svg width="9" height="9" viewBox="0 0 9 9"><path stroke="#ddd" stroke-width="1.600" d="M4.500 0v9M0 4.500h9" /></svg></button>
      </nav>

      <main>
        <aside class="side">
          <div class="rail">
            <i class="grip"></i>
            <button v-for="t in tools" :key="t" class="ib" :aria-label="t"><svg width="16" height="16"><use :href="'#i-' + t" /></svg></button>
          </div>
        </aside>
        <section class="canvas">
          <p class="view">[∸][俯视][二维线框]</p>
          <svg class="drawing" aria-label="图形">
            <path fill="none" stroke="#fff" shape-rendering="crispEdges" d="M537.500 223.500L731.500 359.500 517.500 459.500zM967.500 253.500h394v194h-394z" />
            <path fill="none" stroke="#fff" shape-rendering="crispEdges" d="M19.500 735v49M19 784.500h51M16.500 779.500h8v10h-8zM21 719l6.500 7 6.500-7M27.500 726v6M74 771l13 13M87 771l-13 13" />
          </svg>

          <div class="cube">
            <span class="n">北</span><span class="w">西</span><span class="e">东</span><span class="s">南</span>
            <button class="face">上</button>
          </div>
          <button class="wcs">WCS<svg width="9" height="5" viewBox="0 0 9 5"><path fill="none" stroke="#d5d5dc" d="M.5.5h8l-4 4z" /></svg></button>

          <div class="navbar">
            <svg width="32" height="212" viewBox="0 0 32 212" fill="none" stroke="#222" stroke-width="1.200">
              <circle cx="26" cy="5" r="4" fill="#2b2b2b" /><path stroke="#555" d="M24 3l4 4M28 3l-4 4" />
              <path d="M6 30c0-6 5-10 10-10h10v10a10.500 10.500 0 0 1-20 0z" /><circle cx="16" cy="30" r="6" /><path d="M8 38l4-4M24 38l-4-4" />
              <path fill="#222" stroke="none" d="M13 49h6l-3 3zM13 119h6l-3 3zM13 157h6l-3 3z" />
              <path stroke="#5b5b5b" d="M3 56.500h26M3 164.500h26" />
              <path d="M11 83c-3-5-8-8-6-10 2-1 4 2 5 3l-3-10c0-3 3-3 3 0l2 6v-8c0-3 3-3 3 0v8l1-9c1-2 3-2 3 0v10l2-7c1-2 3-1 3 1-1 6-1 11-5 16z" />
              <path d="M5 90l14 14M19 90L5 104M5 94v-4h4M15 90h4v4M5 100v4h4" /><circle cx="20" cy="103" r="4.500" /><path stroke-width="2.500" d="M23 106l4 5" />
              <ellipse cx="16" cy="140" rx="11" ry="4.500" /><path d="M14 148v-16h-2l4-5 4 5h-2v16z" /><path fill="#222" d="M7 143l5-3v6z" />
              <path d="M4.500 169.500h5v6h-5zM12.500 169.500h5v6h-5zM20.500 169.500h5v6h-5zM4.500 178.500h16v13h-16z" /><path fill="#222" d="M10 181l6 4-6 4z" />
              <circle cx="26" cy="206" r="4" fill="#2b2b2b" /><path stroke="#555" d="M24 206h4" />
            </svg>
          </div>

          <div class="cli">
            <ol><li v-for="h in history" :key="h">{{ h }}</li></ol>
            <div class="prompt">
              <i class="grip v"></i>
              <button class="ib" aria-label="关闭命令行"><svg width="9" height="9" viewBox="0 0 9 9"><path stroke="#bbb" stroke-width="1.800" d="M1 1l7 7M8 1L1 8" /></svg></button>
              <button class="ib" aria-label="自定义"><svg width="14" height="14" viewBox="0 0 14 14"><path stroke="#bbb" stroke-width="2.200" d="M1 13l7-7" /><path fill="none" stroke="#bbb" stroke-width="2" d="M8.500 1.500a3.400 3.400 0 1 0 4 4" /></svg></button>
              <div class="field">
                <svg width="16" height="13" viewBox="0 0 16 13"><path fill="#a8a8a8" stroke="#444" d="M.5.500h15v12H.5z" /><path fill="#444" d="M0 0h16v3H0z" /><path fill="none" stroke="#444" d="M3 5l2 2-2 2M6 10.500h4" /></svg>
                <i class="caret lg ink"></i>
                <input type="text" placeholder="键入命令" aria-label="命令" />
                <i class="up"></i>
              </div>
            </div>
          </div>
        </section>
      </main>

      <footer class="bottom">
        <div class="layouts">
          <button class="on">模型</button><button>布局1</button><button>布局2</button>
          <button aria-label="新建布局"><svg width="9" height="9" viewBox="0 0 9 9"><path stroke="#bbb" stroke-width="2" d="M4.500 0v9M0 4.500h9" /></svg></button>
        </div>
        <div class="status">
          <span class="coords">759.6706, 646.2328, 0.0000</span>
          <button class="space">模型</button>
          <button v-for="(s, i) in status" :key="i" class="st" :class="{ on: s.on, gap: s.gap }" :style="{ width: s.w + 'px' }" :aria-label="s.icon || s.text || '选项'">
            <svg v-if="s.icon" width="16" height="16"><use :href="'#i-' + s.icon" /></svg><i v-if="s.more" class="caret lg"></i>{{ s.text }}
          </button>
          <span class="ime"><b>CH ♪ 简</b></span>
          <button v-for="(s, i) in statusEnd" :key="'e' + i" class="st" :class="{ on: s.on }" :style="{ width: s.w + 'px' }" :aria-label="s.icon || '选项'">
            <svg v-if="s.icon" width="16" height="16"><use :href="'#i-' + s.icon" /></svg><i v-if="s.more" class="caret lg"></i>
          </button>
        </div>
      </footer>

      <div class="mark">
        <svg width="70" height="46" viewBox="0 0 70 46"><path fill="#fff" d="M0 28L44 0l18 16-5 4-14-11-24 16-1 3z" /><path fill="none" stroke="#fff" stroke-width="5" d="M17 25v18h27M30 20v22M30 31h14M30 22h14" /><path fill="#fff" d="M47 20h8v6h-8zM56 18h5v5h-5zM62 22h5v4h-5zM53 29h7v6h-7zM62 29h5v5h-5zM46 36h8v7h-8zM56 38h5v5h-5zM63 37h4v4h-4z" /></svg>
        <div><strong>系统之家</strong><small>XITONGZHIJIA.NET</small></div>
      </div>
    </div>
  </div>
</template>

<style>
body { margin: 0; background: #f4f4f4; overflow: hidden; }
</style>

<style scoped>
* { box-sizing: border-box; }
.desk { height: 100vh; padding: 0 2px; font: 12px/16px "Noto Sans", "Noto Sans CJK SC", sans-serif; color: #e8e8e8; }
.window { position: relative; display: flex; flex-direction: column; height: 100%; overflow: hidden; background: #232a34; border: 1px solid #1490d8; border-bottom: 0; }
.defs { position: absolute; }
button, input, select { margin: 0; padding: 0; border: 0; background: none; font: inherit; color: inherit; white-space: nowrap; }
svg { display: block; flex: none; }
a { color: inherit; text-decoration: none; }
p, h1, ol { margin: 0; padding: 0; list-style: none; }
.ib { display: flex; align-items: center; justify-content: center; flex: none; }
.caret { display: block; flex: none; width: 0; height: 0; border: 3px solid transparent; border-top-color: #d9d9d9; border-bottom: 0; }
.caret.lg { border-width: 4px; border-bottom: 0; }
.caret.ink { border-top-color: #444; }

.title { display: flex; align-items: center; height: 28px; flex: none; padding-left: 9px; }
.title > .caret { margin-right: 7px; }
.title > .caret.lg { margin: 0 17px 0 5px; }
.quick { display: flex; gap: 8px; margin-right: 7px; }
.redo { margin-right: 7px; }
.custom { width: 8px; height: 7px; margin: 0 8px 0 1px; border-top: 1px solid #e0e0e0; position: relative; }
.custom::after { content: ""; position: absolute; left: 0; top: 2px; border: 4px solid transparent; border-top-color: #e0e0e0; border-bottom: 0; }
.share { display: flex; align-items: center; gap: 4px; color: #7cc4fa; }
h1 { flex: 1; text-align: center; font-size: 12px; font-weight: 400; color: #f0f0f0; }
h1 span { margin-left: 20px; }
.tri { border: 4px solid transparent; border-left-color: #ddd; border-right: 0; margin-right: 6px; }
.find { width: 178px; height: 20px; padding: 0 3px 2px; background: #464f62; font-style: italic; color: #c0c4ca; }
.find::placeholder { color: #b8bcc4; opacity: 1; }
.find-btn { margin: 0 8px 0 6px; }
.login { display: flex; align-items: center; gap: 4px; margin-right: 60px; }
.cart { margin: 0 9px 0 5px; }
.apps { margin-right: 5px; }
.sep { width: 1px; height: 18px; background: #4a5364; margin: 0 9px 0 3px; }
.help { width: 16px; height: 16px; border-radius: 50%; background: #d9d9d9; color: #444; font-weight: 700; margin-right: 7px; }
.win-btns { display: flex; gap: 13px; margin: 0 9px 0 64px; }
.min { width: 8px; height: 2px; margin-top: 8px; background: #e0e0e0; }
.max { width: 12px; height: 11px; border: 1px solid #e0e0e0; border-top-width: 2px; }

.menus { display: flex; align-items: center; gap: 25px; height: 20px; flex: none; padding-left: 17px; color: #b8bbc0; border-bottom: 1px solid #3b4453; }
.mdi { display: flex; gap: 7px; margin: 0 5px 0 auto; }

.tabs { display: flex; align-items: flex-end; height: 24px; flex: none; padding-left: 6px; color: #b8bbc0; }
.tabs button { height: 20px; padding: 2px 10px 0; }
.tabs .on { background: #3b4453; color: #fff; }
.tabs .fold { display: flex; width: 15px; height: 8px; margin: 0 4px 5px 25px; padding: 0; background: #e6e6e6; align-items: center; justify-content: center; }
.fold i { border: 3px solid transparent; border-bottom-color: #333; border-top: 0; }
.tabs > .caret { margin-bottom: 7px; }

.ribbon { display: flex; height: 99px; flex: none; margin: 0 3px 0 4px; background: #3b4453; }
.panel { display: flex; flex-direction: column; flex: none; padding-top: 6px; border-right: 1px solid #232a34; }
.body { display: flex; height: 72px; flex: none; }
.panel > footer { position: relative; display: flex; align-items: center; justify-content: center; gap: 6px; height: 21px; padding-top: 2px; }
.big { display: block; flex: none; width: 40px; padding-top: 2px; text-align: center; align-self: flex-start; line-height: 17px; }
.big > svg { margin: 0 auto 3px; }
.big > .caret { margin: 2px auto 0; }
.col { display: flex; flex-direction: column; }
.small { display: flex; align-items: center; gap: 5px; height: 24px; }
.small .caret { margin-left: 5px; }
.icons .ib { width: 24px; height: 24px; }
.icons .sel { height: 22px; margin-top: 1px; border: 1px solid #74c0fc; background: #46607c; }

.p-draw { width: 211px; }
.p-draw .body { padding-left: 2px; }
.p-draw .big + .big + .big + .big { margin-left: 2px; }
.split { position: relative; display: flex; align-self: flex-start; height: 22px; margin: 0 0 0 5px; background: #232a34; padding: 1px; }
.split .cur { width: 22px; padding: 0 3px; background: #3b4453; }
.split .arrow { width: 12px; padding-left: 3px; }
.flyout { position: absolute; z-index: 3; top: 21px; left: 0; width: 84px; padding: 2px 1px; background: #434c5f; border: 1px solid #232a34; }
.flyout button { display: flex; align-items: center; gap: 2px; width: 100%; height: 40px; padding: 0 3px; }
.flyout .on { background: #272e3b; height: 38px; }
.tip { position: absolute; z-index: 4; top: 50px; left: 49px; width: 138px; padding: 8px; border-radius: 3px; background: rgba(200, 200, 200, .4); color: #2a2c30; white-space: nowrap; }
.tip .dim { color: #4a505a; margin-bottom: 8px; }
.tip hr { margin: 0 0 6px; height: 1px; border: 0; background: #60646a; }
.tip .cmd { display: flex; gap: 4px; margin-bottom: 9px; font-weight: 700; color: #3c4046; }
.tip .f1 { font-weight: 700; }
.pointer { position: absolute; z-index: 5; top: 23px; left: 44px; }

.p-modify { width: 227px; }
.p-modify .body { padding-left: 7px; }
.p-modify .col:nth-child(-n+2) { width: 59px; }
.p-modify .col:nth-child(3) { width: 75px; }
.p-anno { width: 156px; }
.p-anno .body { padding-left: 4px; }
.p-anno .big { width: 42px; }
.p-anno .col { padding-left: 3px; }
.p-anno .small .caret { margin-left: 3px; }
.p-layer { width: 252px; }
.p-layer .body { padding-left: 1px; }
.combo { display: flex; align-items: center; height: 22px; margin: 1px 0; padding: 0 2px; background: #4c566a; border: 1px solid #232a34; }
.combo select { flex: 1; min-width: 0; appearance: none; color: #f0f0f0; }
.p-layer .combo { width: 208px; gap: 3px; padding-left: 3px; margin-top: 0; }
.p-layer .combo select { margin-left: 2px; }
.swatch { width: 16px; height: 16px; border: 1px solid #bbb; background: #fff; }
.swatch.dark { width: 14px; height: 14px; margin-left: 3px; border-color: #000; }
.lrow { display: flex; align-items: center; gap: 8px; padding-left: 4px; }
.p-block { width: 134px; }
.p-block .big { margin: 0 4px 0 1px; }
.p-props { width: 244px; }
.p-props .body { padding-left: 1px; }
.p-props .col { flex: 1; padding: 0 1px 0 2px; }
.prow { display: flex; align-items: center; gap: 2px; }
.prow .combo { flex: 1; }
.prow .color { padding-left: 12px; }
.prow .color select { margin-left: 11px; }
.rule { width: 64px; height: 1px; margin: 0 3px 0 1px; background: #fff; }
.launch { position: absolute; right: 3px; top: 8px; }
.p-group { width: 68px; }
.p-group .big { margin-right: 1px; }
.p-util { width: 76px; }
.p-util .big { margin: 0 1px 0 4px; }
.p-util .icons { padding-left: 4px; }
.p-clip { width: 77px; border-right: 0; }
.p-clip .big { margin: 0 4px 0 5px; }

.files { display: flex; align-items: flex-start; height: 30px; flex: none; padding: 4px 0 0 21px; border-bottom: 4px solid #3b4453; margin-left: 3px; }
.file { display: flex; align-items: center; height: 22px; width: 128px; padding: 1px 0 0 11px; border-radius: 10px 10px 0 0; background: #2f3744; color: #b8bbc0; text-align: left; }
.file.on { width: 120px; padding-left: 6px; gap: 28px; background: #3b4453; color: #fff; font-weight: 700; }
.add { width: 22px; height: 18px; margin: 4px 0 0 6px; padding-left: 6px; background: #2f3744; border-radius: 8px; }

main { display: flex; flex: 1; min-height: 0; margin-right: 3px; }
.side { width: 32px; flex: none; padding-left: 4px; background: linear-gradient(90deg, #232a34 3px, #3b4453 3px); }
.rail { display: flex; flex-direction: column; align-items: center; width: 23px; border: 1px solid #232a34; border-left: 0; }
.rail .ib { width: 22px; height: 22px; }
.grip { width: 14px; height: 3px; margin: 2px 0 3px; background: repeating-linear-gradient(90deg, #c8c8c8 0 1px, transparent 1px 2px); }
.canvas { position: relative; flex: 1; background: #000; overflow: hidden; }
.view { position: absolute; left: 4px; top: 6px; color: #fff; }
.drawing { position: absolute; inset: 0; width: 100%; height: 100%; }
.cube { position: absolute; top: 22px; right: 23px; width: 120px; height: 120px; border: 13px solid #2d2d2d; border-radius: 50%; color: #b4b4b4; font: 18px/20px "Noto Sans CJK SC", sans-serif; }
.cube span { position: absolute; }
.cube .n { top: -19px; left: 38px; }
.cube .s { bottom: -19px; left: 38px; }
.cube .w { top: 36px; left: -19px; }
.cube .e { top: 36px; right: -18px; }
.face { position: absolute; top: 21px; left: 21px; width: 52px; height: 52px; border: 10px solid #b4b4b4; background: #a3a8ab; color: #3c4250; font-size: 28px; line-height: 30px; }
.wcs { position: absolute; top: 169px; right: 59px; display: flex; align-items: center; gap: 6px; width: 48px; height: 18px; padding-left: 5px; border-radius: 4px; background: #92929e; color: #3c3c46; font: 11px "Liberation Sans", sans-serif; }
.navbar { position: absolute; top: 212px; right: 4px; border-radius: 4px; background: #444; }
.cli { position: absolute; left: 20%; right: 20%; bottom: 1px; font-family: "Liberation Mono", "Noto Sans CJK SC", monospace; }
.cli ol { display: flex; flex-direction: column; align-items: flex-start; gap: 4px; margin: 0 0 2px 62px; }
.cli li { height: 16px; padding: 0 2px; border-radius: 2px; background: #2a2a2a; color: #717171; white-space: pre; }
.prompt { display: flex; align-items: center; gap: 5px; height: 26px; padding-left: 4px; background: #1f2530; border-radius: 2px; }
.grip.v { width: 5px; height: 17px; margin: 0; background: repeating-linear-gradient(0deg, #1f2530 0 1px, transparent 1px 3px), repeating-linear-gradient(90deg, #bbb 0 2px, transparent 2px 3px); }
.prompt .ib + .ib { margin: 0 1px 0 7px; }
.field { display: flex; flex: 1; align-items: center; height: 26px; padding: 0 3px 0 4px; border: 1px solid #888; background: #b0b0b0; color: #444; }
.field .caret { margin: 0 6px 0 2px; }
.field input { flex: 1; font-style: italic; }
.field input::placeholder { color: #555; opacity: 1; }
.up { border: 4px solid transparent; border-bottom-color: #333; border-top: 0; }

.bottom { display: flex; justify-content: space-between; height: 15px; flex: none; overflow: hidden; border-top: 1px solid #3b4453; }
.layouts { display: flex; height: 18px; margin-left: 18px; }
.layouts button { padding: 0 12px; background: #2f3744; border-radius: 0 0 10px 10px; color: #b8bbc0; }
.layouts .on { background: #3b4453; color: #fff; font-weight: 700; padding: 0 11px 0 8px; }
.status { display: flex; height: 24px; padding-top: 1px; margin-right: 4px; }
.coords { width: 180px; margin-right: 3px; padding: 3px 5px 0 0; background: #3b4453; text-align: right; color: #c0c3c8; }
.space { width: 30px; margin-right: 3px; padding-bottom: 3px; background: #3b4453; font-weight: 700; color: #fff; }
.st { display: flex; flex: none; align-items: center; justify-content: center; background: #3b4453; border-right: 2px solid #232a34; }
.st.gap { border-right-width: 4px; }
.st.on { background: #5b8dc6; }
.ime { flex: none; width: 68px; padding: 3px 4px 0; background: #000; }
.ime b { display: block; height: 20px; padding-top: 2px; border-radius: 5px 5px 0 0; background: #fff; color: #222; text-align: center; font-weight: 400; }
.mark { position: absolute; right: 5px; bottom: 8px; display: flex; align-items: flex-end; color: #fff; }
.mark div { display: flex; flex-direction: column; align-items: flex-end; margin-left: 2px; }
.mark strong { font: 700 23px/29px "Noto Sans CJK SC", sans-serif; }
.mark small { margin-left: -8px; font: 11px/12px "Liberation Serif", serif; }
</style>
